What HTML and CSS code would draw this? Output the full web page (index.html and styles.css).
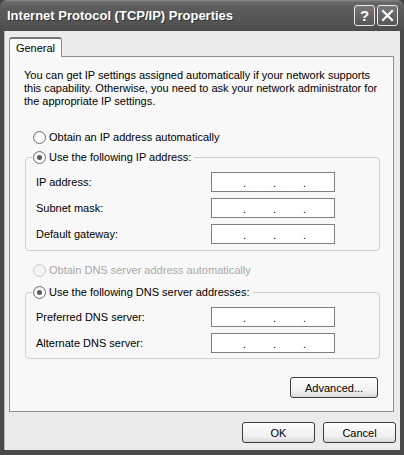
FILE: index.html
```html
<!DOCTYPE html>
<html>
<head>
<meta charset="utf-8">
<link rel="stylesheet" href="styles.css">
</head>
<body>
<div class="window">
  <div class="titlebar">
    <span class="title">Internet Protocol (TCP/IP) Properties</span>
    <div class="tbtns">
      <span class="tbtn help">?</span>
      <span class="tbtn close"><svg width="13" height="13" viewBox="0 0 13 13"><path d="M2 2 L11 11 M11 2 L2 11" stroke="#fff" stroke-width="2.2" stroke-linecap="square"/></svg></span>
    </div>
  </div>
  <div class="frame">
    <div class="client">
      <div class="tabs"><div class="tab">General</div></div>
      <div class="panel">
        <p class="intro">You can get IP settings assigned automatically if your network supports this capability. Otherwise, you need to ask your network administrator for the appropriate IP settings.</p>
        <div class="radio-row"><span class="radio"></span><span>Obtain an IP address automatically</span></div>
        <fieldset class="group g1">
          <legend><span class="radio checked"></span><span>Use the following IP address:</span></legend>
          <div class="row"><span class="lbl">IP address:</span><span class="ip"><i>.</i><i>.</i><i>.</i></span></div>
          <div class="row"><span class="lbl">Subnet mask:</span><span class="ip"><i>.</i><i>.</i><i>.</i></span></div>
          <div class="row"><span class="lbl">Default gateway:</span><span class="ip"><i>.</i><i>.</i><i>.</i></span></div>
        </fieldset>
        <div class="radio-row disabled"><span class="radio"></span><span>Obtain DNS server address automatically</span></div>
        <fieldset class="group g2">
          <legend><span class="radio checked"></span><span>Use the following DNS server addresses:</span></legend>
          <div class="row"><span class="lbl">Preferred DNS server:</span><span class="ip"><i>.</i><i>.</i><i>.</i></span></div>
          <div class="row"><span class="lbl">Alternate DNS server:</span><span class="ip"><i>.</i><i>.</i><i>.</i></span></div>
        </fieldset>
        <div class="adv-row"><span class="btn adv">Advanced...</span></div>
      </div>
      <div class="footer">
        <span class="btn ok">OK</span>
        <span class="btn cancel">Cancel</span>
      </div>
    </div>
  </div>
</div>
</body>
</html>
```
FILE: styles.css
```css
html, body { margin: 0; padding: 0; background: #2e2e2e; }
.window {
  width: 404px; height: 455px;
  display: flex; flex-direction: column;
  font-family: "Liberation Sans", Arial, sans-serif;
  font-size: 11px; color: #000;
  background: #444;
}
.titlebar {
  height: 31px; flex: none;
  display: flex; align-items: center; justify-content: space-between;
  padding: 0 6px 0 7px;
  background: linear-gradient(#8a8a8a 0px, #6a6a6a 2px, #5c5c5c 8px, #555 20px, #4c4c4c 31px);
  border-radius: 7px 7px 0 0;
}
.title {
  color: #fff; font-weight: bold; font-size: 13px;
  text-shadow: 1px 1px 0 #333;
}
.tbtns { display: flex; gap: 2px; }
.tbtn {
  width: 19px; height: 19px;
  border: 1px solid #e8e8e8; border-radius: 3px;
  background: linear-gradient(#777, #555);
  display: flex; align-items: center; justify-content: center;
  color: #fff; font-weight: bold; font-size: 15px;
}
.frame {
  flex: 1; display: flex;
  padding: 0 4px 5px 4px;
  background: #4a4a4a;
}
.client {
  flex: 1; display: flex; flex-direction: column;
  background: #ebebeb;
  border-left: 1px solid #b4b4b4;
}
.tabs { display: flex; padding: 6px 0 0 4px; position: relative; z-index: 1; }
.tab {
  width: 51px; height: 18px;
  border: 1px solid #8e8e8e; border-bottom: none;
  border-top: 2px solid #777;
  border-radius: 3px 3px 0 0;
  background: #fbfbfb;
  display: flex; align-items: center; justify-content: center;
}
.panel {
  height: 354px; width: 355px;
  margin-left: 4px; margin-top: -1px;
  border: 1px solid #8e8e8e;
  background: #f8f8f8;
  padding: 0 14px;
  display: flex; flex-direction: column;
}
.intro { margin: 12px 0 0 0; line-height: 13px; }
.radio-row { display: flex; align-items: center; height: 14px; gap: 3px; margin: 22px 0 0 9px; }
.radio-row.disabled { color: #a9a9a9; margin-top: 12px; }
.radio {
  width: 11px; height: 11px; border-radius: 50%;
  border: 1px solid #6f6f6f;
  background: radial-gradient(circle at 60% 60%, #fff 30%, #e2e2e2 100%);
  position: relative; flex: none;
}
.disabled .radio { border-color: #c8c8c8; background: #f4f4f4; }
.radio.checked::after {
  content: ""; position: absolute; left: 3px; top: 3px;
  width: 5px; height: 5px; border-radius: 50%;
  background: #5a5a5a;
}
.group {
  margin: 6px 0 0 1px; padding: 0 0 0 10px;
  width: 343px;
  border: 1px solid #cfcfcf; border-radius: 4px;
  min-width: 0;
}
.g1 { padding-bottom: 6px; }
.g2 { margin-top: 8px; padding-bottom: 5px; }
.group legend {
  display: flex; align-items: center; gap: 3px;
  padding: 0 3px 0 1px; margin-left: -4px; height: 14px;
}
.row { display: flex; align-items: center; height: 20px; margin-top: 6px; }
.group legend + .row { margin-top: 8px; }
.lbl { width: 175px; flex: none; }
.ip {
  border: 1px solid #7f7f7f; background: #fff;
  display: flex; align-items: flex-end;
  padding-left: 31px; box-sizing: border-box; width: 124px; height: 20px;
}
.ip i { font-style: normal; width: 30px; line-height: 15px; }
.adv-row { display: flex; justify-content: flex-end; margin-top: 18px; }
.btn {
  height: 19px; border: 1px solid #3c3c3c; border-radius: 3px;
  background: linear-gradient(#fdfdfd, #f0f0f0 70%, #d8d8d8);
  display: flex; align-items: center; justify-content: center;
}
.adv { width: 86px; margin-right: 1px; }
.footer { display: flex; justify-content: flex-end; gap: 8px; margin-top: 10px; padding-right: 4px; }
.ok, .cancel { width: 71px; }
```
